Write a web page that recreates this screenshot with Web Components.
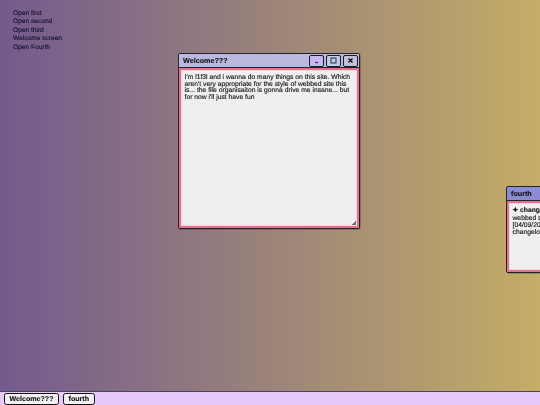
<!DOCTYPE html>
<html><head><meta charset="utf-8"><style>
html,body{margin:0;height:100%;overflow:hidden}
body{font-family:"Liberation Sans",Arial,sans-serif;color:#222;text-rendering:geometricPrecision;-webkit-text-stroke:.12px currentColor}
</style></head><body>
<x-desktop>
<x-launch slot="links">Open first</x-launch>
<x-launch slot="links">Open second</x-launch>
<x-launch slot="links">Open third</x-launch>
<x-launch slot="links">Welcome screen</x-launch>
<x-launch slot="links">Open Fourth</x-launch>
<x-window slot="windows" title="Welcome???" controls style="left:178px;top:53px;width:182px;height:176px;--bar:#b9b9e0">I'm l1f3l and i wanna do many things on this site. Which aren't very appropriate for the style of webbed site this is... the file organisaiton is gonna drive me insane... but for now i'll just have fun</x-window>
<x-window slot="windows" title="fourth" style="left:506px;top:186px;width:182px;height:87px;--bar:#8c8cd2"><b style="display:block;white-space:nowrap;margin-bottom:1.5px">✦ changelog</b>webbed site changelog<br>[04/09/2024] added<br>changelog window</x-window>
<x-task slot="tasks">Welcome???</x-task>
<x-task slot="tasks">fourth</x-task>
</x-desktop>
<script>
function def(n,css,html){customElements.define(n,class extends HTMLElement{constructor(){super();this.attachShadow({mode:"open"}).innerHTML=`<style>${css}</style>${html}`;}});}
def("x-desktop",`:host{display:grid;grid-template-rows:1fr 14px;width:540px;height:405px;position:relative;overflow:hidden;background:linear-gradient(90deg,#735a8e,#c4ad66);filter:blur(.4px)}
.links{display:flex;flex-direction:column;padding:10px 0 0 13px;align-items:flex-start}
.bar{display:flex;align-items:center;gap:4px;padding:0 4px;background:#e7c9fb;border-top:1px solid #4a4458;}`,
`<div class="links"><slot name="links"></slot></div><slot name="windows"></slot><div class="bar"><slot name="tasks"></slot></div>`);
def("x-launch",`:host{display:block;font-size:6.6px;line-height:8.45px;color:#16102a}`,`<slot></slot>`);
def("x-task",`:host{display:block;font-size:7.1px;font-weight:700;line-height:10px;padding:0 4.5px;background:#f2f0f2;border:1px solid #111;border-radius:2.5px;color:#111}`,`<slot></slot>`);
customElements.define("x-window",class extends HTMLElement{constructor(){super();
const t=this.getAttribute("title");const c=this.hasAttribute("controls");
this.attachShadow({mode:"open"}).innerHTML=`<style>
:host{position:absolute;display:flex;flex-direction:column;box-sizing:border-box;border:1px solid #23232f;border-radius:2px;background:#23232f;box-shadow:1px 1px 0 rgba(0,0,0,.2)}
.bar{display:flex;align-items:center;justify-content:space-between;height:13px;padding:0 1px 0 4px;background:var(--bar);font-size:7.2px;font-weight:700;color:#111;flex:none}
.btns{display:flex;gap:2px}
.btn{box-sizing:border-box;width:15px;height:12px;border:1px solid #1c1c1c;border-radius:2px;display:flex;align-items:center;justify-content:center}
.btn svg{display:block;width:7px;height:7px}
.body{flex:1;margin-top:1px;box-sizing:border-box;border:2px solid #e4728c;box-shadow:inset 0 0 0 1px #f8d5dc;background:#efefef;padding:5px 3.5px;font-size:6.75px;line-height:6.67px;color:#111;position:relative;overflow:hidden}
.grip{position:absolute;right:1px;bottom:1px;width:4px;height:4px;background:linear-gradient(135deg,transparent 50%,#777 50%)}
</style><div class="bar"><span>${t}</span>${c?`<div class="btns">
<div class="btn" style="background:#c8b8ee"><svg viewBox="0 0 7 7"><path d="M2 5.5h3" stroke="#3a1a8a" stroke-width="1.2"/></svg></div>
<div class="btn" style="background:#c3cbe6"><svg viewBox="0 0 7 7"><rect x="1" y="1" width="5" height="5" fill="none" stroke="#234" stroke-width="1"/></svg></div>
<div class="btn" style="background:#c3bfdc"><svg viewBox="0 0 7 7"><path d="M1.5 1.5l4 4M5.5 1.5l-4 4" stroke="#111" stroke-width="1.4"/></svg></div></div>`:""}</div><div class="body"><slot></slot><div class="grip"></div></div>`;}});
</script>
</body></html>
